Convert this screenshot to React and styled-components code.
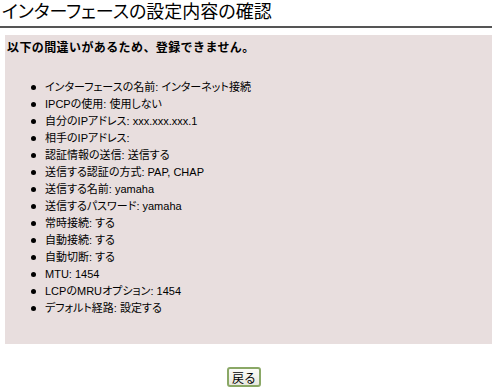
import React from 'react';
import styled, { createGlobalStyle } from 'styled-components';

const GlobalStyle = createGlobalStyle`
  body {
    margin: 0;
    background: #ffffff;
    font-family: "Liberation Sans", "Noto Sans CJK JP", sans-serif;
    color: #000000;
  }
`;

const items = [
  'インターフェースの名前: インターネット接続',
  'IPCPの使用: 使用しない',
  '自分のIPアドレス:  xxx.xxx.xxx.1',
  '相手のIPアドレス:',
  '認証情報の送信: 送信する',
  '送信する認証の方式: PAP, CHAP',
  '送信する名前: yamaha',
  '送信するパスワード: yamaha',
  '常時接続: する',
  '自動接続: する',
  '自動切断: する',
  'MTU: 1454',
  'LCPのMRUオプション: 1454',
  'デフォルト経路: 設定する',
];

const App = () => {
  return (
    <Page>
      <GlobalStyle />
      <Title>インターフェースの設定内容の確認</Title>
      <Panel>
        <Notice>以下の間違いがあるため、登録できません。</Notice>
        <List>
          {items.map((text) => (
            <Item key={text}>{text}</Item>
          ))}
        </List>
      </Panel>
      <Actions>
        <BackButton type="button">戻る</BackButton>
      </Actions>
    </Page>
  );
};

export default App;

const Page = styled.div`
  width: 492px;
  padding-top: 1px;
`;

const Title = styled.h1`
  margin: 0;
  padding: 0 0 3px 2px;
  font-size: 18px;
  font-weight: normal;
  line-height: 22px;
  font-feature-settings: 'palt';
  border-bottom: 2px solid #555555;
`;

const Panel = styled.div`
  margin: 7px 0 0 5px;
  height: 309px;
  box-sizing: border-box;
  padding: 5px 0 0 2px;
  background-color: #e8dede;
`;

const Notice = styled.div`
  font-size: 12px;
  font-weight: bold;
  line-height: 16px;
  letter-spacing: 0.4px;
`;

const List = styled.ul`
  margin: 23px 0 0;
  padding: 0 0 0 24px;
  list-style: none;
`;

const Item = styled.li`
  display: flex;
  align-items: center;
  gap: 9px;
  font-size: 11px;
  line-height: 17px;
  font-feature-settings: 'palt';

  &::before {
    content: '';
    width: 5px;
    height: 5px;
    border-radius: 50%;
    background: #000000;
    flex-shrink: 0;
  }
`;

const Actions = styled.div`
  display: flex;
  justify-content: center;
  padding: 23px 4px 0 0;
`;

const BackButton = styled.button`
  width: 34px;
  height: 20px;
  padding: 0;
  font-family: "Liberation Sans", "Noto Sans CJK JP", sans-serif;
  font-size: 12px;
  color: #000000;
  background: linear-gradient(#fcfcf8, #e8e8de);
  border: 2px solid #8aa866;
  border-radius: 3px;
`;
